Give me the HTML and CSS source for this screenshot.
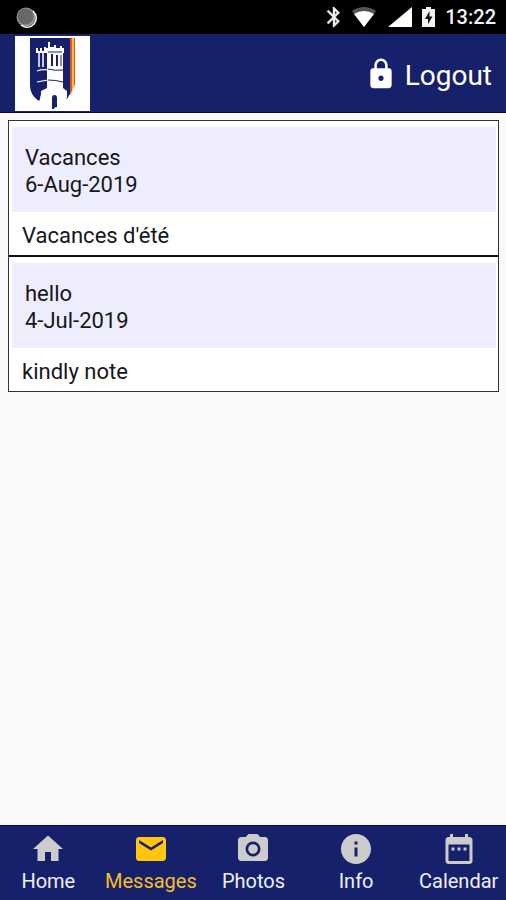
FILE: index.html
```html
<!DOCTYPE html>
<html lang="en">
<head>
<meta charset="utf-8">
<meta name="viewport" content="width=device-width, initial-scale=1">
<title>Messages</title>
<link rel="stylesheet" href="styles.css">
</head>
<body>
<div class="status">
  <svg class="status-dot" width="22" height="22" viewBox="0 0 22 22" aria-hidden="true">
    <circle cx="11" cy="11" r="9.5" fill="#999"/>
    <path d="M18 5a9.200 9.200 0 0 1-12 14" fill="none" stroke="#eee" stroke-width="1.600"/>
    <circle cx="10.500" cy="10.500" r="8" fill="#686868"/>
  </svg>
  <div class="status-icons">
    <svg width="16" height="22" viewBox="5 1 14 22" aria-hidden="true"><path fill="#eee" stroke="#eee" stroke-width=".4" d="M17.710 7.710L12 2h-1v7.590L6.410 5 5 6.410 10.590 12 5 17.590 6.410 19 11 14.410V22h1l5.710-5.710L13.410 12zM13 5.830l1.880 1.880L13 9.590zm1.880 10.460L13 18.170v-3.760z"/></svg>
    <svg class="wifi" width="24" height="20" viewBox="0 0 24 20" aria-hidden="true"><path fill="#555" d="M0 4Q12-4 24 4L12 20z"/><path fill="#fff" d="M2 7Q12 1 22 7L12 20z"/></svg>
    <svg class="signal" width="24" height="20" viewBox="0 0 24 20" aria-hidden="true"><path fill="#fff" d="M24 0v20H0z"/></svg>
    <svg class="battery" width="13" height="20" viewBox="0 0 13 20" aria-hidden="true"><path fill="#f2f2f2" d="M4 0h5v2h4v18H0V2h4z"/><path fill="#111" d="M7.500 4L3 12h3v5l4.500-7.500h-3z"/></svg>
    <span class="clock">13:22</span>
  </div>
</div>
<header class="header">
  <svg class="logo" width="75" height="75" viewBox="0 0 75 75" role="img" aria-label="School crest">
    <path fill="#fff" d="M0 0h75v75H0z"/>
    <path fill="#17216b" d="M15 2h40v56l-3 5-1-1-1-4H26l-1 5-1 2c-6-4-9-9-9-16z"/>
    <path fill="#d95436" d="M55 2h2v53l-2 4z"/>
    <path fill="#f8bd35" d="M57 2h2v49l-2 5z"/>
    <path fill="#e4552e" d="M59 2h1v46l-1 4z"/>
    <path fill="#fff" d="M32 52V17h-1v-5h2V6h2v5h4V9h2v3h4v-2h2v2h2v5h-1v35l4 3v6l-2 5v5H25v-6l1-6v-4z"/>
    <path fill="none" stroke="#fff" stroke-width="2" d="M22 12v4h10M26 15v-3M30 15v-4"/>
    <path fill="none" stroke="#fff" stroke-width="1.500" d="M24 17v14M28 17v14"/>
    <path fill="none" stroke="#fff" stroke-width="1.200" d="M22 35q5-2 11-1M22 46q5-1 11-2"/>
    <path fill="none" stroke="#17216b" stroke-width="2" d="M37 18v12M42 19v11"/>
    <path fill="none" stroke="#17216b" stroke-width="1" d="M33 16h14M33 33q7 2 15 1M33 44q8 0 15 2M46 19v11"/>
    <path fill="#17216b" d="M37 73V62q0-3 2.500-3t2.500 3v9q-3 0-3 2z"/>
  </svg>
  <button class="logout" type="button">
    <svg width="32" height="34" viewBox="0 0 24 24" preserveAspectRatio="none" aria-hidden="true"><path fill="#fff" d="M18 8h-1V6c0-2.760-2.240-5-5-5S7 3.240 7 6v2H6c-1.100 0-2 .9-2 2v10c0 1.100.9 2 2 2h12c1.100 0 2-.9 2-2V10c0-1.100-.9-2-2-2zm-6 9c-1.100 0-2-.9-2-2s.9-2 2-2 2 .9 2 2-.9 2-2 2zm3.100-9H8.900V6c0-1.710 1.390-3.100 3.100-3.100s3.100 1.390 3.100 3.100z"/></svg>
    <span>Logout</span>
  </button>
</header>
<main class="main">
  <div class="messages">
    <article class="message">
      <div class="message-head">
        <div>Vacances</div>
        <div>6-Aug-2019</div>
      </div>
      <p class="message-body">Vacances d'été</p>
    </article>
    <article class="message">
      <div class="message-head">
        <div>hello</div>
        <div>4-Jul-2019</div>
      </div>
      <p class="message-body">kindly note</p>
    </article>
  </div>
</main>
<nav class="tabs">
  <div class="tab-list">
    <a class="tab" href="#home"><svg viewBox="0 0 24 24" aria-hidden="true"><path d="M10 20v-6h4v6h5v-8h3L12 3 2 12h3v8z"/></svg><span>Home</span></a>
    <a class="tab active" href="#messages"><svg viewBox="0 0 24 24" aria-hidden="true"><path d="M20 4H4c-1.100 0-2 .9-2 2v12c0 1.100.9 2 2 2h16c1.100 0 2-.9 2-2V6c0-1.100-.9-2-2-2zm0 4l-8 5-8-5V6l8 5 8-5z"/></svg><span>Messages</span></a>
    <a class="tab" href="#photos"><svg viewBox="0 0 24 24" aria-hidden="true"><path fill-rule="evenodd" d="M9 2L7.170 4H4c-1.100 0-2 .9-2 2v12c0 1.100.9 2 2 2h16c1.100 0 2-.9 2-2V6c0-1.100-.9-2-2-2h-3.170L15 2zm3 15a5 5 0 1 1 0-10 5 5 0 0 1 0 10zm0-1.800a3.200 3.200 0 1 0 0-6.400 3.200 3.200 0 0 0 0 6.400z"/></svg><span>Photos</span></a>
    <a class="tab" href="#info"><svg viewBox="0 0 24 24" aria-hidden="true"><path d="M12 2C6.480 2 2 6.480 2 12s4.480 10 10 10 10-4.480 10-10S17.520 2 12 2zm1 15h-2v-6h2zm0-8h-2V7h2z"/></svg><span>Info</span></a>
    <a class="tab" href="#calendar"><svg viewBox="0 0 24 24" aria-hidden="true"><path d="M9 11H7v2h2zm4 0h-2v2h2zm4 0h-2v2h2zm2-7h-1V2h-2v2H8V2H6v2H5c-1.110 0-2 .9-2 2v14c0 1.100.89 2 2 2h14c1.100 0 2-.9 2-2V6c0-1.100-.9-2-2-2zm0 16H5V9h14z"/></svg><span>Calendar</span></a>
  </div>
</nav>
</body>
</html>
```
FILE: styles.css
```css
* {
  box-sizing: border-box;
}

body {
  margin: 0;
  min-height: 100vh;
  display: flex;
  flex-direction: column;
  overflow-x: hidden;
  background: #fafafa;
  color: #16161c;
  font-family: Roboto, "Liberation Sans", sans-serif;
  font-size: 22px;
  line-height: 27px;
}

svg {
  display: block;
  flex: none;
}

.status {
  display: flex;
  align-items: center;
  justify-content: space-between;
  height: 34px;
  padding: 0 10px 0 15px;
  background: #000;
}

.status-icons {
  display: flex;
  align-items: center;
}

.wifi,
.signal,
.battery,
.clock {
  margin-left: 10px;
}

.signal {
  margin-left: 12px;
}

.clock {
  color: #f2f2f2;
  font-size: 20px;
  font-weight: 500;
}

.header {
  display: flex;
  align-items: center;
  justify-content: space-between;
  height: 79px;
  padding: 0 14px 0 15px;
  background: #17216b;
  border-bottom: 1px solid #06065a;
}

.logout {
  display: flex;
  align-items: center;
  gap: 8px;
  padding: 2px 0 0;
  border: 0;
  background: none;
  color: #fff;
  font: inherit;
  font-size: 28px;
  line-height: 34px;
}

.logout span {
  padding-top: 4px;
}

.main {
  flex: 1;
  padding: 7px;
}

.messages {
  border: 1px solid #333;
  margin-left: 1px;
}

.message {
  padding: 6px 2px 0 3px;
  background: #fff;
}

.message + .message {
  border-top: 2px solid #111;
}

.message-head {
  padding: 17px 13px 14px;
  background: #eeedfd;
}

.message-body {
  margin: 0;
  padding: 10px 10px 6px;
}

.tabs {
  background: #17216b;
  border-top: 1px solid #06065a;
}

.tab-list {
  display: grid;
  grid-template-columns: repeat(5, 1fr);
  margin: 0 -4px 0 -3px;
}

.tab {
  display: flex;
  flex-direction: column;
  align-items: center;
  gap: 1px;
  padding: 5px 0;
  color: #eef0fb;
  font-size: 20px;
  line-height: 27px;
  text-decoration: none;
}

.tab svg {
  width: 36px;
  height: 36px;
  fill: #ccc;
}

.tab.active {
  color: #f5bf26;
}

.tab.active svg {
  fill: #ffc60b;
}
```
